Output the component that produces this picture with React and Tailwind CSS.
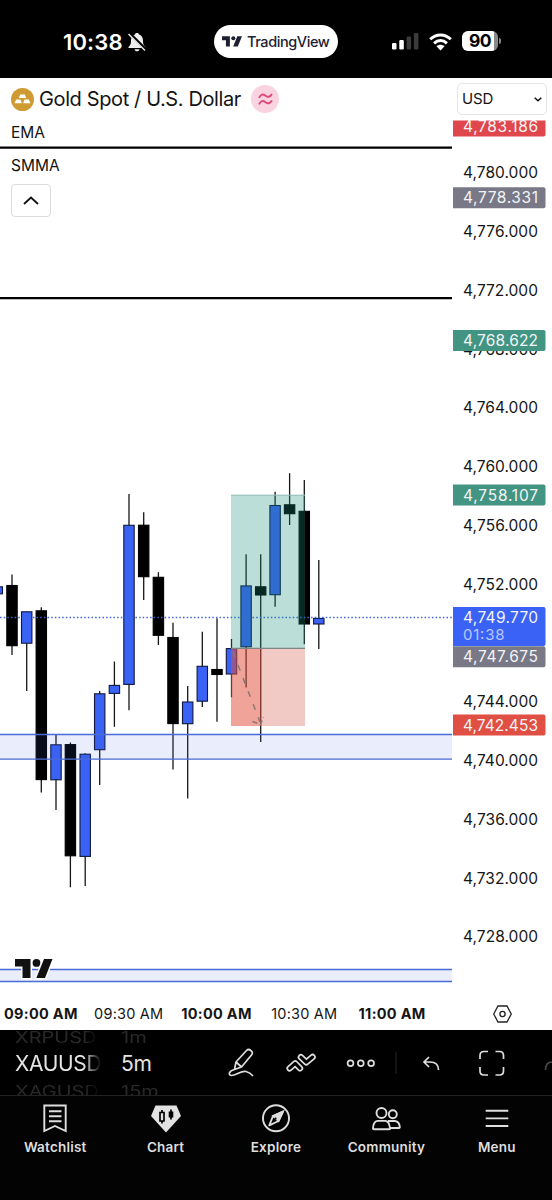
import React from "react";

const UP = "#3a62f4";

// [centre x, high, body top, body bottom, low, rising]
const candles = [
  [-2.7, 586.5, 586.8, 593.8, 594, 1],
  [12, 574.5, 585.5, 645.7, 655, 0],
  [26.7, 611.5, 611.8, 643.2, 691, 1],
  [41.3, 607.3, 610.8, 779.6, 792.5, 0],
  [56, 735, 744.8, 779.8, 810, 1],
  [70.4, 742.5, 744.6, 855.8, 887.3, 0],
  [85.2, 753.3, 754.2, 856.4, 886, 1],
  [99.7, 691, 693.8, 749.7, 785, 1],
  [114.4, 661.5, 685.4, 693.4, 726.8, 1],
  [129, 494, 525.3, 684.4, 710.3, 1],
  [143.7, 512.3, 525.2, 576.7, 600, 0],
  [158.4, 572.2, 577.3, 635.3, 645, 0],
  [173, 622.7, 637.5, 723.6, 769.5, 0],
  [187.7, 686, 702, 723.7, 798.4, 1],
  [202.3, 631.7, 666.3, 701.2, 707, 1],
  [217, 618.3, 669.5, 674.5, 721.8, 0],
  [231.5, 639, 648.6, 674, 697.3, 1],
  [246.1, 554.2, 585.9, 646.8, 687.5, 1],
  [260.7, 554.2, 586.8, 595, 742, 0],
  [275.1, 491.7, 505.5, 594.7, 606.8, 1],
  [289.6, 473.2, 504.8, 513.7, 525, 0],
  [304.3, 480, 511.3, 624, 644.2, 0],
  [318.8, 560, 618.4, 624, 649, 1],
];

const scale = [
  ["4,780.000", 172],
  ["4,776.000", 231],
  ["4,772.000", 289.7],
  ["4,768.000", 348.7],
  ["4,764.000", 407.3],
  ["4,760.000", 466],
  ["4,756.000", 525],
  ["4,752.000", 583.7],
  ["4,744.000", 701.3],
  ["4,740.000", 760],
  ["4,736.000", 818.7],
  ["4,732.000", 877.5],
  ["4,728.000", 936.3],
];

const tags = [
  ["4,783.186", 126, "#df474c"],
  ["4,778.331", 197.7, "#787886"],
  ["4,768.622", 340.5, "#429582"],
  ["4,758.107", 495, "#429582"],
  ["4,747.675", 656.7, "#787886"],
  ["4,742.453", 725, "#e04f43"],
];

function BrandMark({ className, fill = "#111" }) {
  return (
    <svg className={className} viewBox="0 0 38 20" fill={fill}>
      <path d="M0 0H15V19.5H7.5V7.5H0Z" />
      <circle cx="21.5" cy="3.9" r="3.9" />
      <path d="M29 0H38L30 19.5H21.3Z" />
    </svg>
  );
}

function StatusBar() {
  return (
    <header className="flex h-[78px] shrink-0 items-start bg-black text-white">
      <div className="flex h-[83px] w-[214px] shrink-0 items-center pl-[63px]">
        <span className="w-[60px] text-[22px] font-semibold leading-6 tracking-[0.150px]">10:38</span>
        <svg className="ml-[4px] h-5 w-5" viewBox="0 0 20 20">
          <path d="M10 1C8.700 1 8 1.700 8 2.500C5.300 3.300 4 5.500 4 8.500C4 12 3.500 13 1.500 15V16H18.500V15C16.500 13 16 12 16 8.500C16 5.500 14.700 3.300 12 2.500C12 1.700 11.300 1 10 1ZM7.500 17.200H12.500C12.200 18.700 11.300 19.300 10 19.300S7.800 18.700 7.500 17.200Z" fill="#eee" />
          <path d="M2.200 1.200L18.700 17.700" stroke="#000" strokeWidth="3.200" />
          <path d="M1.500 2L18 18.500" stroke="#eee" strokeWidth="1.400" />
        </svg>
      </div>
      <div className="mt-[25px] flex h-[33px] w-[124px] shrink-0 items-center rounded-full bg-white pl-[8px] text-[#1c2030]">
        <BrandMark className="h-[11px] w-[20px]" fill="#1c2030" />
        <span className="ml-[5px] text-[14.500px] font-medium tracking-[-0.420px]">TradingView</span>
      </div>
      <div className="flex h-[82px] items-center pl-[54px]">
        <svg className="h-[18px] w-[27px]" viewBox="0 0 27 18">
          <rect x="0" y="11" width="4.500" height="6.500" rx="1.200" fill="#fff" />
          <rect x="7.300" y="8" width="4.500" height="9.500" rx="1.200" fill="#fff" />
          <rect x="14.600" y="4.500" width="4.500" height="13" rx="1.200" fill="#3b3b3b" />
          <rect x="21.900" y="1" width="4.500" height="16.500" rx="1.200" fill="#3b3b3b" />
        </svg>
        <svg className="ml-[9px] h-[19px] w-[25px]" viewBox="0 0 24 19" fill="none" stroke="#fff" strokeWidth="3">
          <path d="M1.700 7.300C7.600 1.500 16.400 1.500 22.300 7.300" />
          <path d="M5.600 11.300C9.400 7.700 14.600 7.700 18.400 11.300" />
          <path d="M8 14.300C10.300 12.300 13.700 12.300 16 14.300L12 18.500Z" fill="#fff" stroke="none" />
        </svg>
        <div className="ml-[9px] flex h-[20px] w-[36px] items-center justify-center rounded-[6px] bg-linear-to-r from-white from-90% to-[#888] to-90% text-[17.500px] font-bold leading-none tracking-[-0.600px] text-black">
          90
        </div>
        <div className="ml-[1px] h-[6px] w-[2px] rounded-r-full bg-[#888]" />
      </div>
    </header>
  );
}

function Plot() {
  return (
    <svg className="block h-[920px] w-[452px] shrink-0" viewBox="0 78 452 920">
      {candles.map(([x, high, top, bottom, low, rising], i) => (
        <g key={i}>
          <path d={`M${x} ${high}V${low}`} stroke="#161616" strokeWidth="1.300" />
          <rect x={x - 5.200} y={top} width="10.400" height={bottom - top} fill={rising ? UP : "#000"} stroke={rising ? "#10183c" : "#000"} strokeWidth="1.100" />
        </g>
      ))}
      <path d="M0 617.500H452" stroke="#3f66dc" strokeWidth="1.400" strokeDasharray="1.500 2.160" />
      <rect x="231" y="495" width="74" height="153.500" fill="#168c7a" fillOpacity=".29" />
      <path d="M231 495.200H305" stroke="#8ebdb6" strokeWidth="1" />
      <rect x="231" y="648.500" width="74" height="77.500" fill="#d4503f" fillOpacity=".3" />
      <rect x="231" y="648.500" width="30" height="77.500" fill="#e8523f" fillOpacity=".32" />
      <path d="M231 648.400H305" stroke="#7f8583" strokeWidth="1.200" />
      <path d="M233 652L260 722" stroke="#8d7775" strokeWidth="1.500" strokeDasharray="6 8" />
      <path d="M252.500 721.500L260.500 724.500L263.500 717" fill="none" stroke="#8d7775" strokeWidth="1.500" strokeDasharray="5 3" />
      <rect x="0" y="734.500" width="452" height="24.700" fill="#3f5fe8" fillOpacity=".115" />
      <path d="M0 734.500H452M0 759.200H452" stroke="#4a6bd6" strokeWidth="1.300" />
      <rect x="0" y="969.500" width="452" height="12" fill="#3f5fe8" fillOpacity=".115" />
      <path d="M0 969.500H452M0 981.500H452" stroke="#4a6bd6" strokeWidth="1.300" />
      <path d="M0 147.600H452M0 298.200H452" stroke="#000" strokeWidth="2.300" />
      <g transform="translate(15 959)" fill="#111" stroke="#fff" strokeWidth="3" paintOrder="stroke">
        <path d="M0 0H15.500V19H7.500V7.500H0Z" />
        <circle cx="21.500" cy="3.900" r="3.900" />
        <path d="M29 0H37.500L30 19H21.300Z" />
      </g>
    </svg>
  );
}

function PriceScale() {
  return (
    <svg className="block h-[920px] w-[100px] shrink-0" viewBox="452 78 100 920" fontSize="15.500">
      {scale.map(([label, y]) => (
        <text key={label} x="463" y={y + 6} textLength="75" fill="#151515">{label}</text>
      ))}
      {tags.map(([label, y, color]) => (
        <g key={label}>
          <path d={`M453 ${y - 10.500}h90.500a2 2 0 0 1 2 2v17a2 2 0 0 1 -2 2h-90.500z`} fill={color} />
          <text x="463" y={y + 5.600} textLength="75" fill="#f4f4f6">{label}</text>
        </g>
      ))}
      <path d="M453 607h90.500a2 2 0 0 1 2 2v35a2 2 0 0 1 -2 2h-90.500z" fill={UP} />
      <text x="463" y="622.700" textLength="75" fill="#f4f4f6">4,749.770</text>
      <text x="463" y="640" fontSize="15" textLength="41.500" fill="#b9c8ff">01:38</text>
      <rect x="452" y="78" width="100" height="42.500" fill="#fff" />
    </svg>
  );
}

function Legend() {
  return (
    <div className="absolute left-[11px] top-[7px] flex flex-col items-start text-[#131313]">
      <div className="flex h-7 items-center">
        <svg className="h-[23px] w-[23px]" viewBox="0 0 23 23">
          <circle cx="11.500" cy="11.500" r="11.500" fill="#cf9a32" />
          <path d="M9.200 6.500H13.800L15.200 10H7.800ZM5.200 11.500H9.400L10.900 15.200H3.500ZM13.600 11.500H17.800L19.500 15.200H12.100Z" fill="#fff" />
        </svg>
        <span className="ml-[5px] w-[202px] text-[20px] tracking-[-0.380px] whitespace-nowrap">Gold Spot / U.S. Dollar</span>
        <span className="ml-[10px] flex h-7 w-7 items-center justify-center rounded-full bg-[#f9d3e0]">
          <svg className="h-[13px] w-[15px]" viewBox="0 0 15 13" fill="none" stroke="#dc487c" strokeWidth="1.900">
            <path d="M1 4.800C3 .8 5 1 7.500 2.700S12 4.300 14 1M1 11.300C3 7.300 5 7.500 7.500 9.200S12 10.800 14 7.500" />
          </svg>
        </span>
      </div>
      <span className="mt-[9px] text-[15.500px] leading-[22px]">EMA</span>
      <span className="mt-[11px] text-[15.500px] leading-[22px]">SMMA</span>
      <button className="mt-[7px] flex h-[33px] w-[40px] items-center justify-center rounded-[4px] border border-[#dcdcdc] bg-white">
        <svg className="h-[9px] w-[16px]" viewBox="0 0 16 9" fill="none" stroke="#111" strokeWidth="1.800">
          <path d="M1 8L8 1.500L15 8" />
        </svg>
      </button>
    </div>
  );
}

function TimeScale() {
  const times = [["09:00 AM", 1], ["09:30 AM", 0], ["10:00 AM", 1], ["10:30 AM", 0], ["11:00 AM", 1]];
  return (
    <div className="flex h-8 items-center">
      <div className="-ml-[3px] grid w-[439px] shrink-0 grid-cols-5 text-[14.500px] text-[#151515]">
        {times.map(([t, major]) => (
          <span key={t} className={major ? "text-center font-bold tracking-[0.300px]" : "text-center tracking-[0.200px]"}>{t}</span>
        ))}
      </div>
      <svg className="ml-[57px] h-[18px] w-[19px]" viewBox="0 0 19 18" fill="none" stroke="#222" strokeWidth="1.300">
        <path d="M5 1H14L18.300 9L14 17H5L.7 9Z" />
        <circle cx="9.500" cy="9" r="2.600" />
      </svg>
    </div>
  );
}

function Wheel({ items, className }) {
  return (
    <div className={className}>
      <span className="mt-[1px] block h-4 origin-top scale-y-[.78] text-[20px] leading-4 text-[#292929]">{items[0]}</span>
      <span className="mt-[4px] block h-[26px] text-[21px] leading-[26px] tracking-[-0.350px] text-[#e4e4e4]">{items[1]}</span>
      <span className="mt-[8px] block h-4 origin-top scale-y-[.78] text-[20px] leading-4 text-[#292929]">{items[2]}</span>
    </div>
  );
}

function Toolbar() {
  return (
    <div className="flex h-[66px] shrink-0 items-center overflow-hidden border-b border-[#222] bg-black text-[#dedede]">
      <div className="flex h-full w-[226px] shrink-0 overflow-hidden">
        <Wheel items={["XRPUSD", "XAUUSD", "XAGUSD"]} className="ml-[15px] h-full w-[86px] overflow-hidden mask-r-from-80% mask-r-to-100%" />
        <Wheel items={["1m", "5m", "15m"]} className="ml-[20px] h-full w-[60px]" />
      </div>
      <svg className="h-[66px] w-[326px] shrink-0" viewBox="226 1030 326 66" fill="none" stroke="currentColor" strokeWidth="1.700">
        <path d="M234.500 1069.500L236 1062L246.500 1050.500Q248.500 1048.500 250.800 1050.500Q253.500 1052.500 251.500 1055L241.500 1067L234.500 1069.500ZM236 1062L241.500 1067M234.500 1069.500C228.500 1071 228 1075.500 231.500 1075.500C236 1075.500 241 1070.500 246 1071.500Q250 1072.500 253 1076" strokeLinejoin="round" />
        <g strokeLinecap="round" strokeLinejoin="round">
          <path d="M289.600 1068.300L295.200 1063.400L300 1068.300M300.900 1057.200L306.300 1062.300L312.600 1057" strokeWidth="6.400" />
          <path d="M289.600 1068.300L295.200 1063.400L300 1068.300M300.900 1057.200L306.300 1062.300L312.600 1057" stroke="#000" strokeWidth="3" />
        </g>
        <circle cx="350.500" cy="1063.300" r="2.900" />
        <circle cx="360.800" cy="1063.300" r="2.900" />
        <circle cx="371.100" cy="1063.300" r="2.900" />
        <path d="M396 1052V1074" stroke="#242424" strokeWidth="1" />
        <path d="M429 1057L424 1062L429 1067M424 1062H430Q438.500 1062 438.500 1070" />
        <path d="M480 1059V1055.500Q480 1051.500 484 1051.500H488M495.500 1051.500H499.500Q503.500 1051.500 503.500 1055.500V1059M503.500 1067V1071Q503.500 1075 499.500 1075H495.500M488 1075H484Q480 1075 480 1071V1067" />
        <path d="M545.500 1070Q545.500 1062 552 1062" stroke="#4a4a4a" />
      </svg>
    </div>
  );
}

const tabs = [
  ["Watchlist", <g key="w"><path d="M4.300 2.500H25.700V28L15 23L4.300 28Z" /><path d="M9 8.300H21.500M9 13.300H21.500M9 18.300H21.500" /></g>],
  ["Chart", <g key="c" stroke="none"><path d="M4.500 2.500H25.500L30 13L15 29.500L0 13Z" fill="#e2e2e2" /><path d="M11 7V9.500M11 18V20.500M20 6.500V16.500" stroke="#000" strokeWidth="1.700" /><path d="M9 9.500H13V18H9Z" fill="none" stroke="#000" strokeWidth="1.700" /><path d="M17.700 8.500H22.300V14.500H17.700Z" fill="#000" /></g>],
  ["Explore", <g key="e"><circle cx="15" cy="15.300" r="13" /><path d="M22 8.500L12 13L8.300 22.300L17.500 18Z" strokeLinejoin="round" /><path d="M22 8.500L12 13L17.500 18Z" fill="currentColor" /><circle cx="14.500" cy="15.700" r="1.100" fill="#000" stroke="none" /></g>],
  ["Community", <g key="m"><circle cx="10.500" cy="10" r="5" /><circle cx="21.800" cy="11.300" r="4" /><path d="M6.500 17.900H14.500Q18.500 18.500 19 26Q19 26.300 18 26.300H3Q2 26.300 2 25.500Q2.300 18.500 6.500 17.900ZM17 18H24Q28.300 18.500 28.800 24Q28.900 25 28 25H19" /></g>],
  ["Menu", <path key="n" d="M3.700 7.800H26.300M3.700 15.400H26.300M3.700 23H26.300" />],
];

function TabBar() {
  return (
    <nav className="grid h-[104px] shrink-0 grid-cols-5 bg-[#030303] pt-[7px] text-[#dedede]">
      {tabs.map(([label, icon]) => (
        <div key={label} className="flex flex-col items-center">
          <svg className="h-[30px] w-[30px]" viewBox="0 0 30 30" fill="none" stroke="currentColor" strokeWidth="1.900">{icon}</svg>
          <span className="mt-[4px] text-[13.500px] font-semibold leading-5 tracking-[0.200px]">{label}</span>
        </div>
      ))}
    </nav>
  );
}

export default function App() {
  return (
    <div className="flex h-[1200px] w-[552px] flex-col overflow-hidden bg-white font-['Inter',sans-serif]">
      <StatusBar />
      <main className="relative h-[952px] shrink-0">
        <div className="flex">
          <Plot />
          <PriceScale />
        </div>
        <TimeScale />
        <Legend />
        <div className="absolute right-[5px] top-[5px] flex h-[32px] w-[90px] items-center justify-between rounded-[5px] border border-[#e4e4e8] bg-white pl-1 pr-[4px] text-[15px] tracking-[-0.200px] text-[#151515]">
          USD
          <svg className="h-[5px] w-[8px]" viewBox="0 0 8 5" fill="none" stroke="#111" strokeWidth="1.500"><path d="M.7 .8L4 3.800L7.300 .8" /></svg>
        </div>
      </main>
      <Toolbar />
      <TabBar />
    </div>
  );
}
